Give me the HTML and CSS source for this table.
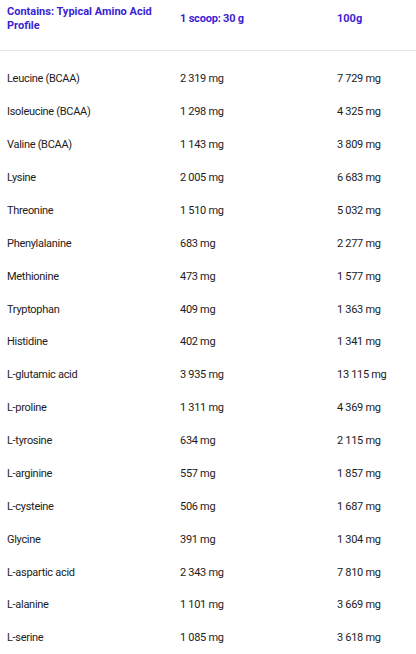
FILE: index.html
```html
<!DOCTYPE html>
<html>
<head>
<meta charset="utf-8">
<link rel="stylesheet" href="styles.css">
</head>
<body>
<div class="table">
  <div class="row head">
    <div class="c1">Contains: Typical Amino Acid Profile</div>
    <div class="c2">1 scoop: 30 g</div>
    <div class="c3">100g</div>
  </div>
  <div class="body">
    <div class="row"><div class="c1">Leucine (BCAA)</div><div class="c2">2 319 mg</div><div class="c3">7 729 mg</div></div>
    <div class="row"><div class="c1">Isoleucine (BCAA)</div><div class="c2">1 298 mg</div><div class="c3">4 325 mg</div></div>
    <div class="row"><div class="c1">Valine (BCAA)</div><div class="c2">1 143 mg</div><div class="c3">3 809 mg</div></div>
    <div class="row"><div class="c1">Lysine</div><div class="c2">2 005 mg</div><div class="c3">6 683 mg</div></div>
    <div class="row"><div class="c1">Threonine</div><div class="c2">1 510 mg</div><div class="c3">5 032 mg</div></div>
    <div class="row"><div class="c1">Phenylalanine</div><div class="c2">683 mg</div><div class="c3">2 277 mg</div></div>
    <div class="row"><div class="c1">Methionine</div><div class="c2">473 mg</div><div class="c3">1 577 mg</div></div>
    <div class="row"><div class="c1">Tryptophan</div><div class="c2">409 mg</div><div class="c3">1 363 mg</div></div>
    <div class="row"><div class="c1">Histidine</div><div class="c2">402 mg</div><div class="c3">1 341 mg</div></div>
    <div class="row"><div class="c1">L-glutamic acid</div><div class="c2">3 935 mg</div><div class="c3">13 115 mg</div></div>
    <div class="row"><div class="c1">L-proline</div><div class="c2">1 311 mg</div><div class="c3">4 369 mg</div></div>
    <div class="row"><div class="c1">L-tyrosine</div><div class="c2">634 mg</div><div class="c3">2 115 mg</div></div>
    <div class="row"><div class="c1">L-arginine</div><div class="c2">557 mg</div><div class="c3">1 857 mg</div></div>
    <div class="row"><div class="c1">L-cysteine</div><div class="c2">506 mg</div><div class="c3">1 687 mg</div></div>
    <div class="row"><div class="c1">Glycine</div><div class="c2">391 mg</div><div class="c3">1 304 mg</div></div>
    <div class="row"><div class="c1">L-aspartic acid</div><div class="c2">2 343 mg</div><div class="c3">7 810 mg</div></div>
    <div class="row"><div class="c1">L-alanine</div><div class="c2">1 101 mg</div><div class="c3">3 669 mg</div></div>
    <div class="row"><div class="c1">L-serine</div><div class="c2">1 085 mg</div><div class="c3">3 618 mg</div></div>
  </div>
</div>
</body>
</html>
```
FILE: styles.css
```css
html, body {
  margin: 0;
  padding: 0;
  background: #ffffff;
}
body {
  font-family: Roboto, "Noto Sans", sans-serif;
  font-size: 11px;
  color: #1c1c1c;
}
.table {
  width: 416px;
}
.row {
  display: grid;
  grid-template-columns: 173px 157px 1fr;
  align-items: center;
  padding-left: 7px;
}
.head {
  height: 38px;
  padding-bottom: 12px;
  border-bottom: 1px solid #e4e4e4;
  color: #3b1fd4;
  font-weight: 700;
  line-height: 14px;
}
.head .c1 {
  padding-right: 8px;
}
.head .c2 {
  letter-spacing: -0.2px;
}
.body {
  padding-top: 11.5px;
}
.body .row {
  height: 32.88px;
  letter-spacing: -0.3px;
}
```
